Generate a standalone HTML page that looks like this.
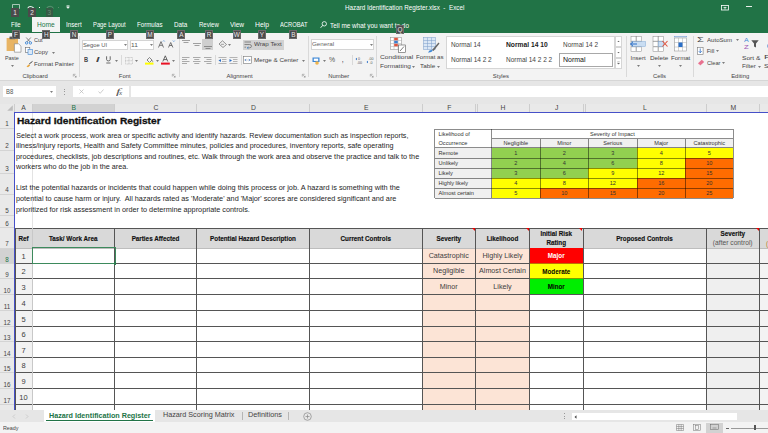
<!DOCTYPE html>
<html><head><meta charset="utf-8">
<style>
*{margin:0;padding:0;box-sizing:border-box}
html,body{width:768px;height:433px;overflow:hidden;background:#fff;font-family:"Liberation Sans",sans-serif;position:relative}
.a{position:absolute;white-space:nowrap}
svg.a{overflow:visible}
</style></head><body>
<div class="a" style="left:0px;top:0px;width:768px;height:32.5px;background:#217346;"></div>
<div class="a" style="left:0px;top:32.5px;width:768px;height:47.5px;background:#f3f3f3;"></div>
<div class="a" style="left:0px;top:80px;width:768px;height:23.5px;background:#e6e6e6;"></div>
<div class="a" style="left:0px;top:80px;width:768px;height:0.7px;background:#d6d6d6;"></div>
<div class="a" style="left:0px;top:103.5px;width:768px;height:8.5px;background:#e9e9e9;"></div>
<div class="a" style="left:0px;top:112px;width:14px;height:298px;background:#e9e9e9;"></div>
<div class="a" style="left:345.00px;top:3.72px;font-size:6.3px;line-height:7.56px;color:#fff;">Hazard Identification Register.xlsx&nbsp; -&nbsp; Excel</div>
<svg class="a" style="left:11.5px;top:3.8px;" width="8" height="5" viewBox="0 0 8 5"><path d="M0.5 4.8V0.5H7.5V4.8" fill="none" stroke="#e0ebe4" stroke-width="0.7"/></svg>
<svg class="a" style="left:27px;top:5px;" width="8" height="4" viewBox="0 0 8 4"><path d="M0.8 3.2C1.8 1 4.5 1 6.8 3.2" fill="none" stroke="#f0f0f0" stroke-width="1.1"/></svg>
<div class="a" style="left:38.8px;top:6.8px;width:1.6px;height:1px;background:#fff;"></div>
<svg class="a" style="left:45.5px;top:5px;" width="8" height="4" viewBox="0 0 8 4"><path d="M0.5 3.5C2.5 0.5 6 0.5 7.5 3.5" fill="none" stroke="#5a8f6f" stroke-width="1.1"/></svg>
<div class="a" style="left:57.8px;top:6.8px;width:1.4px;height:1px;background:#5a8f6f;"></div>
<svg class="a" style="left:65.5px;top:5px;" width="4" height="4" viewBox="0 0 4 4"><path d="M0.5 0.6H3.5M0.6 1.8L2 3.4L3.4 1.8Z" fill="#fff" stroke="#fff" stroke-width="0.6"/></svg>
<div class="a" style="left:11.25px;top:8.1px;width:7.75px;height:8.799999999999999px;background:#4b4a4b;border:0.5px solid #4b4a4b"></div>
<div class="a" style="left:13.35px;top:8.66px;font-size:6.4px;line-height:7.68px;color:#e8e8e8;">1</div>
<div class="a" style="left:28.3px;top:8.1px;width:7.699999999999999px;height:8.799999999999999px;background:#4b4a4b;border:0.5px solid #4b4a4b"></div>
<div class="a" style="left:30.37px;top:8.66px;font-size:6.4px;line-height:7.68px;color:#e8e8e8;">2</div>
<div class="a" style="left:45.8px;top:8.1px;width:7.200000000000003px;height:8.799999999999999px;background:#365a45;border:0.5px solid #365a45"></div>
<div class="a" style="left:47.62px;top:8.66px;font-size:6.4px;line-height:7.68px;color:#6d8f7a;">3</div>
<svg class="a" style="left:721px;top:4.5px;" width="8" height="5.5" viewBox="0 0 8 5.5"><rect x="0.5" y="0.5" width="7" height="4.5" fill="none" stroke="#fff" stroke-width="0.8"/><path d="M2.5 2.5H5.5M4 1.8V4.5" stroke="#fff" stroke-width="0.7"/></svg>
<div class="a" style="left:746px;top:6px;width:6px;height:0.8px;background:#e8efe9;"></div>
<div class="a" style="left:32.3px;top:16.7px;width:27.7px;height:15.8px;background:#f3f3f3;"></div>
<div class="a" style="left:10.60px;top:21.22px;font-size:6.3px;line-height:7.56px;color:#fff;transform:scaleX(0.9555);transform-origin:0 50%;">File</div>
<div class="a" style="left:37.00px;top:21.22px;font-size:6.3px;line-height:7.56px;color:#217346;transform:scaleX(1.0532);transform-origin:0 50%;">Home</div>
<div class="a" style="left:65.60px;top:21.22px;font-size:6.3px;line-height:7.56px;color:#fff;transform:scaleX(0.9933);transform-origin:0 50%;">Insert</div>
<div class="a" style="left:92.70px;top:21.22px;font-size:6.3px;line-height:7.56px;color:#fff;transform:scaleX(0.9243);transform-origin:0 50%;">Page Layout</div>
<div class="a" style="left:137.40px;top:21.22px;font-size:6.3px;line-height:7.56px;color:#fff;transform:scaleX(0.9712);transform-origin:0 50%;">Formulas</div>
<div class="a" style="left:174.30px;top:21.22px;font-size:6.3px;line-height:7.56px;color:#fff;transform:scaleX(1.0069);transform-origin:0 50%;">Data</div>
<div class="a" style="left:198.80px;top:21.22px;font-size:6.3px;line-height:7.56px;color:#fff;transform:scaleX(0.9585);transform-origin:0 50%;">Review</div>
<div class="a" style="left:230.20px;top:21.22px;font-size:6.3px;line-height:7.56px;color:#fff;transform:scaleX(1.0412);transform-origin:0 50%;">View</div>
<div class="a" style="left:255.00px;top:21.22px;font-size:6.3px;line-height:7.56px;color:#fff;transform:scaleX(1.0805);transform-origin:0 50%;">Help</div>
<div class="a" style="left:279.60px;top:21.22px;font-size:6.3px;line-height:7.56px;color:#fff;transform:scaleX(0.9204);transform-origin:0 50%;">ACROBAT</div>
<div class="a" style="left:330.00px;top:21.92px;font-size:6.3px;line-height:7.56px;color:#fff;transform:scaleX(1.0162);transform-origin:0 50%;">Tell me what you want to do</div>
<svg class="a" style="left:320px;top:20.5px;" width="7" height="8" viewBox="0 0 7 8"><circle cx="4.3" cy="2.8" r="2.2" fill="none" stroke="#fff" stroke-width="0.8"/><path d="M2.8 4.3L0.6 6.8" stroke="#fff" stroke-width="0.9"/></svg>
<svg class="a" style="left:6px;top:36px;" width="16" height="17" viewBox="0 0 16 17"><rect x="0.6" y="2" width="11.4" height="13" fill="#e8b464"/><rect x="3.5" y="0.6" width="5.5" height="2.6" fill="#5a5a5a"/><path d="M8.4 7.8H12.6L15 10.2V16.2H8.4Z" fill="#fff" stroke="#7a7a7a" stroke-width="0.6"/></svg>
<div class="a" style="left:5.40px;top:54.60px;font-size:6px;line-height:7.20px;color:#444;transform:scaleX(0.8994);transform-origin:0 50%;">Paste</div>
<svg class="a" style="left:11.1px;top:64.8px;" width="3" height="2" viewBox="0 0 3 2"><path d="M0 0.2H3L1.5 1.8Z" fill="#555"/></svg>
<svg class="a" style="left:24.5px;top:36.5px;" width="7" height="7.5" viewBox="0 0 7 7.5"><path d="M1.2 0.5L5.2 5M5.8 0.5L1.8 5" stroke="#6a6a6a" stroke-width="0.8"/><circle cx="1.6" cy="5.9" r="1.2" fill="none" stroke="#3b86d6" stroke-width="0.9"/><circle cx="5.4" cy="5.9" r="1.2" fill="none" stroke="#3b86d6" stroke-width="0.9"/></svg>
<div class="a" style="left:34.00px;top:37.00px;font-size:6px;line-height:7.20px;color:#444;transform:scaleX(0.9211);transform-origin:0 50%;">Cut</div>
<svg class="a" style="left:24.5px;top:47.3px;" width="8" height="8" viewBox="0 0 8 8"><rect x="0.5" y="0.5" width="4.3" height="5" fill="#fff" stroke="#6a6a6a" stroke-width="0.6"/><rect x="3" y="2.5" width="4.5" height="5" fill="#dbe8f7" stroke="#3b86d6" stroke-width="0.6"/></svg>
<div class="a" style="left:34.00px;top:48.60px;font-size:6px;line-height:7.20px;color:#444;">Copy</div>
<svg class="a" style="left:52.3px;top:51.6px;" width="3" height="2" viewBox="0 0 3 2"><path d="M0 0.2H3L1.5 1.8Z" fill="#555"/></svg>
<svg class="a" style="left:25.5px;top:60.5px;" width="7" height="6.5" viewBox="0 0 7 6.5"><path d="M0.5 5.5L3 3.3L4.2 4.5L2 6.3Z" fill="#e8a53a"/><path d="M3.2 3L6.5 0.4" stroke="#444" stroke-width="1"/></svg>
<div class="a" style="left:34.00px;top:60.60px;font-size:6px;line-height:7.20px;color:#444;transform:scaleX(1.0055);transform-origin:0 50%;">Format Painter</div>
<div class="a" style="left:22.47px;top:72.66px;font-size:5.9px;line-height:7.08px;color:#444;">Clipboard</div>
<svg class="a" style="left:73.3px;top:74.3px;" width="3.5" height="3.5" viewBox="0 0 3.5 3.5"><path d="M0.3 0.3H2.5M0.3 0.3V2.5M1.2 1.2L3.2 3.2M3.2 1.8V3.2H1.8" fill="none" stroke="#777" stroke-width="0.5"/></svg>
<div class="a" style="left:79.2px;top:35.5px;width:0.6px;height:41.5px;background:#d9d9d9;"></div>
<div class="a" style="left:81.8px;top:39.8px;width:46.3px;height:10.1px;background:#fff;border:0.5px solid #d4d4d4"></div>
<div class="a" style="left:82.90px;top:41.08px;font-size:6.2px;line-height:7.44px;color:#555;transform:scaleX(0.9361);transform-origin:0 50%;">Segoe UI</div>
<svg class="a" style="left:123.8px;top:44px;" width="3" height="2" viewBox="0 0 3 2"><path d="M0 0.2H3L1.5 1.8Z" fill="#555"/></svg>
<div class="a" style="left:129.9px;top:39.8px;width:23.9px;height:10.1px;background:#fff;border:0.5px solid #d4d4d4"></div>
<div class="a" style="left:131.20px;top:41.08px;font-size:6.2px;line-height:7.44px;color:#555;transform:scaleX(1.0565);transform-origin:0 50%;">11</div>
<svg class="a" style="left:149.5px;top:44px;" width="3" height="2" viewBox="0 0 3 2"><path d="M0 0.2H3L1.5 1.8Z" fill="#555"/></svg>
<svg class="a" style="left:157.5px;top:39.5px;" width="7" height="8" viewBox="0 0 7 8"><path d="M0.5 7.5L3 1.6L5.5 7.5M1.5 5.3H4.5" fill="none" stroke="#555" stroke-width="0.8"/><path d="M4.8 1.6L5.8 0.5L6.8 1.6" fill="none" stroke="#3b86d6" stroke-width="0.6"/></svg>
<svg class="a" style="left:168.3px;top:39.5px;" width="7" height="8" viewBox="0 0 7 8"><path d="M0.5 7.5L2.7 2.5L4.9 7.5M1.4 5.5H4" fill="none" stroke="#555" stroke-width="0.8"/><path d="M4.8 0.5L5.8 1.6L6.8 0.5" fill="none" stroke="#3b86d6" stroke-width="0.6"/></svg>
<div class="a" style="left:84.10px;top:56.30px;font-size:6.5px;line-height:7.80px;color:#444;font-weight:bold;transform:scaleX(0.8734);transform-origin:0 50%;">B</div>
<div class="a" style="left:95.60px;top:56.30px;font-size:6.5px;line-height:7.80px;color:#444;font-weight:bold;transform:scaleX(1.8827);transform-origin:0 50%;font-style:italic;">I</div>
<svg class="a" style="left:105.6px;top:56px;" width="5" height="7.5" viewBox="0 0 5 7.5"><path d="M0.6 0.3V3.6C0.6 5.4 4.2 5.4 4.2 3.6V0.3M0.3 7H4.5" fill="none" stroke="#444" stroke-width="0.8"/></svg>
<svg class="a" style="left:115.1px;top:59.5px;" width="3" height="2" viewBox="0 0 3 2"><path d="M0 0.2H3L1.5 1.8Z" fill="#555"/></svg>
<div class="a" style="left:121px;top:55px;width:0.6px;height:10px;background:#d9d9d9;"></div>
<svg class="a" style="left:124.5px;top:56.5px;" width="8" height="7.5" viewBox="0 0 8 7.5"><rect x="0.5" y="0.5" width="7" height="6.5" fill="none" stroke="#aaa" stroke-width="0.6" stroke-dasharray="0.8 0.6"/><path d="M4 0.5V7M0.5 3.75H7.5" stroke="#aaa" stroke-width="0.6" stroke-dasharray="0.8 0.6"/></svg>
<svg class="a" style="left:135.0px;top:59.5px;" width="3" height="2" viewBox="0 0 3 2"><path d="M0 0.2H3L1.5 1.8Z" fill="#555"/></svg>
<svg class="a" style="left:144.8px;top:54.5px;" width="9" height="10" viewBox="0 0 9 10"><path d="M2 5L4.5 2.5L7 5L4.5 7.5Z" fill="none" stroke="#555" stroke-width="0.7"/><path d="M7 5.2Q8.2 6.5 7.5 7.2" fill="none" stroke="#555" stroke-width="0.6"/><rect x="0" y="7.6" width="8.5" height="2" fill="#ffff00"/></svg>
<svg class="a" style="left:155.5px;top:59.5px;" width="3" height="2" viewBox="0 0 3 2"><path d="M0 0.2H3L1.5 1.8Z" fill="#555"/></svg>
<svg class="a" style="left:161.2px;top:54.5px;" width="9" height="10" viewBox="0 0 9 10"><path d="M1.8 6.5L4.3 0.8L6.8 6.5M2.7 4.6H5.9" fill="none" stroke="#444" stroke-width="0.8"/><rect x="0" y="7.6" width="8.8" height="2" fill="#e81123"/></svg>
<svg class="a" style="left:172.0px;top:59.5px;" width="3" height="2" viewBox="0 0 3 2"><path d="M0 0.2H3L1.5 1.8Z" fill="#555"/></svg>
<div class="a" style="left:118.80px;top:72.66px;font-size:5.9px;line-height:7.08px;color:#444;">Font</div>
<svg class="a" style="left:172px;top:74.3px;" width="3.5" height="3.5" viewBox="0 0 3.5 3.5"><path d="M0.3 0.3H2.5M0.3 0.3V2.5M1.2 1.2L3.2 3.2M3.2 1.8V3.2H1.8" fill="none" stroke="#777" stroke-width="0.5"/></svg>
<div class="a" style="left:178.5px;top:35.5px;width:0.6px;height:41.5px;background:#d9d9d9;"></div>
<div class="a" style="left:202.2px;top:39px;width:10.6px;height:11.1px;background:#cfcfcf;"></div>
<svg class="a" style="left:182px;top:40px;" width="8" height="9" viewBox="0 0 8 9"><path d="M0 0.5H8M1.5 2.5H6.5" stroke="#8a8a8a" stroke-width="0.8"/></svg>
<svg class="a" style="left:192.8px;top:40px;" width="8" height="9" viewBox="0 0 8 9"><path d="M0 3.5H8M1.5 5.5H6.5" stroke="#8a8a8a" stroke-width="0.8"/></svg>
<svg class="a" style="left:203.8px;top:40px;" width="8" height="10" viewBox="0 0 8 10"><path d="M0 6.5H8M1.5 8.5H6.5" stroke="#7a7a7a" stroke-width="0.8"/></svg>
<svg class="a" style="left:217.5px;top:40px;" width="9.5" height="8" viewBox="0 0 9.5 8"><path d="M1 4L4.5 0.8L8.5 4.5L5 7.5Z" fill="none" stroke="#666" stroke-width="0.7"/><path d="M3 4.3H6" stroke="#666" stroke-width="0.6"/></svg>
<svg class="a" style="left:227.6px;top:43.8px;" width="3" height="2" viewBox="0 0 3 2"><path d="M0 0.2H3L1.5 1.8Z" fill="#555"/></svg>
<div class="a" style="left:242.9px;top:39.5px;width:41.5px;height:10.6px;background:#d2d2d2;"></div>
<svg class="a" style="left:244px;top:40.5px;" width="8" height="8.5" viewBox="0 0 8 8.5"><path d="M0.5 1H7M0.5 3.5H5.5Q7.5 3.5 7.5 5.2Q7.5 6.8 5.5 6.8H3.5M0.5 6.2H2" fill="none" stroke="#666" stroke-width="0.7"/><path d="M4.5 5.8L3 6.8L4.5 7.8" fill="none" stroke="#3b86d6" stroke-width="0.7"/></svg>
<div class="a" style="left:253.90px;top:41.20px;font-size:6px;line-height:7.20px;color:#444;transform:scaleX(1.0377);transform-origin:0 50%;">Wrap Text</div>
<svg class="a" style="left:182px;top:57px;" width="8" height="8" viewBox="0 0 8 8"><path d="M0 0.5H7.5M0 2.5H5M0 4.5H7.5M0 6.5H5" stroke="#8a8a8a" stroke-width="0.7"/></svg>
<svg class="a" style="left:192.8px;top:57px;" width="8" height="8" viewBox="0 0 8 8"><path d="M0 0.5H7.5M1.25 2.5H6.25M0 4.5H7.5M1.25 6.5H6.25" stroke="#8a8a8a" stroke-width="0.7"/></svg>
<svg class="a" style="left:204px;top:57px;" width="8" height="8" viewBox="0 0 8 8"><path d="M0 0.5H7.5M2.5 2.5H7.5M0 4.5H7.5M2.5 6.5H7.5" stroke="#8a8a8a" stroke-width="0.7"/></svg>
<div class="a" style="left:215px;top:55px;width:0.6px;height:10px;background:#d9d9d9;"></div>
<svg class="a" style="left:218px;top:56.5px;" width="9" height="8" viewBox="0 0 9 8"><path d="M0.5 0.5H8.5M4 2.5H8.5M4 4.5H8.5M0.5 6.5H8.5" stroke="#8a8a8a" stroke-width="0.6"/><path d="M3 2L0.5 3.5L3 5Z" fill="#2b6fc7"/></svg>
<svg class="a" style="left:229px;top:56.5px;" width="9" height="8" viewBox="0 0 9 8"><path d="M0.5 0.5H8.5M4 2.5H8.5M4 4.5H8.5M0.5 6.5H8.5" stroke="#8a8a8a" stroke-width="0.6"/><path d="M0.5 2L3 3.5L0.5 5Z" fill="#2b6fc7"/></svg>
<div class="a" style="left:240.6px;top:55px;width:0.6px;height:10px;background:#d9d9d9;"></div>
<svg class="a" style="left:243.2px;top:56.3px;" width="9" height="8" viewBox="0 0 9 8"><rect x="0.5" y="0.5" width="8" height="7" fill="#fff" stroke="#777" stroke-width="0.6"/><path d="M0.5 4H8.5" stroke="#999" stroke-width="0.5"/><path d="M2 4L3.2 3M2 4L3.2 5M7 4L5.8 3M7 4L5.8 5" stroke="#2b6fc7" stroke-width="0.6" fill="none"/></svg>
<div class="a" style="left:253.90px;top:56.70px;font-size:6px;line-height:7.20px;color:#444;transform:scaleX(1.0460);transform-origin:0 50%;">Merge &amp; Center</div>
<svg class="a" style="left:301.6px;top:59.6px;" width="3" height="2" viewBox="0 0 3 2"><path d="M0 0.2H3L1.5 1.8Z" fill="#555"/></svg>
<div class="a" style="left:226.48px;top:72.66px;font-size:5.9px;line-height:7.08px;color:#444;">Alignment</div>
<svg class="a" style="left:302px;top:74.3px;" width="3.5" height="3.5" viewBox="0 0 3.5 3.5"><path d="M0.3 0.3H2.5M0.3 0.3V2.5M1.2 1.2L3.2 3.2M3.2 1.8V3.2H1.8" fill="none" stroke="#777" stroke-width="0.5"/></svg>
<div class="a" style="left:308.3px;top:35.5px;width:0.6px;height:41.5px;background:#d9d9d9;"></div>
<div class="a" style="left:310.7px;top:38.8px;width:63.6px;height:11.1px;background:#fff;border:0.5px solid #d4d4d4"></div>
<div class="a" style="left:311.80px;top:40.90px;font-size:6px;line-height:7.20px;color:#666;transform:scaleX(1.0400);transform-origin:0 50%;">General</div>
<svg class="a" style="left:370.0px;top:43.8px;" width="3" height="2" viewBox="0 0 3 2"><path d="M0 0.2H3L1.5 1.8Z" fill="#555"/></svg>
<svg class="a" style="left:311.5px;top:56.5px;" width="9.5" height="8" viewBox="0 0 9.5 8"><rect x="0.5" y="0.5" width="7" height="4.5" fill="#3b86d6"/><rect x="1.8" y="1.6" width="4.4" height="2.3" fill="#fff"/><circle cx="5" cy="6" r="1.8" fill="#f0b44c"/></svg>
<svg class="a" style="left:322.5px;top:59.5px;" width="3" height="2" viewBox="0 0 3 2"><path d="M0 0.2H3L1.5 1.8Z" fill="#555"/></svg>
<div class="a" style="left:329.30px;top:56.30px;font-size:6.5px;line-height:7.80px;color:#555;transform:scaleX(1.0555);transform-origin:0 50%;">%</div>
<div class="a" style="left:342.30px;top:56.00px;font-size:7px;line-height:8.40px;color:#555;font-weight:bold;transform:scaleX(0.7199);transform-origin:0 50%;">,</div>
<div class="a" style="left:351.5px;top:55px;width:0.6px;height:10px;background:#d9d9d9;"></div>
<svg class="a" style="left:355px;top:56px;" width="8" height="8" viewBox="0 0 8 8"><path d="M0.5 3L2 1.8V4.2Z" fill="#2b6fc7"/><text x="3" y="3.5" font-size="3.6" fill="#555" font-family="Liberation Sans">0</text><text x="2" y="7.5" font-size="3.6" fill="#555" font-family="Liberation Sans">.00</text></svg>
<svg class="a" style="left:365.5px;top:56px;" width="8" height="8" viewBox="0 0 8 8"><text x="2.5" y="3.5" font-size="3.6" fill="#555" font-family="Liberation Sans">.00</text><path d="M0.5 6L2 4.8V7.2Z" fill="#2b6fc7"/><text x="3.5" y="7.5" font-size="3.6" fill="#555" font-family="Liberation Sans">.0</text></svg>
<div class="a" style="left:328.21px;top:72.66px;font-size:5.9px;line-height:7.08px;color:#444;">Number</div>
<svg class="a" style="left:370.2px;top:74.3px;" width="3.5" height="3.5" viewBox="0 0 3.5 3.5"><path d="M0.3 0.3H2.5M0.3 0.3V2.5M1.2 1.2L3.2 3.2M3.2 1.8V3.2H1.8" fill="none" stroke="#777" stroke-width="0.5"/></svg>
<div class="a" style="left:376.2px;top:35.5px;width:0.6px;height:41.5px;background:#d9d9d9;"></div>
<svg class="a" style="left:390px;top:36.5px;" width="16" height="16" viewBox="0 0 16 16"><rect x="0.5" y="0.5" width="11" height="12" fill="#fff" stroke="#888" stroke-width="0.5"/><path d="M0.5 3.5H11.5M0.5 6.5H11.5M0.5 9.5H11.5M4 0.5V12.5M8 0.5V12.5" stroke="#aaa" stroke-width="0.5"/><rect x="4.2" y="0.8" width="3.6" height="2.5" fill="#e0533d"/><rect x="4.2" y="3.8" width="3.6" height="2.5" fill="#3b7fd0"/><rect x="4.2" y="6.8" width="3.6" height="2.5" fill="#e0533d"/><rect x="8.5" y="8" width="7" height="7.5" fill="#fff" stroke="#555" stroke-width="0.6"/><path d="M10 14L14 9.5" stroke="#444" stroke-width="0.7"/></svg>
<div class="a" style="left:380.00px;top:54.10px;font-size:6px;line-height:7.20px;color:#444;transform:scaleX(1.1092);transform-origin:0 50%;">Conditional</div>
<div class="a" style="left:379.70px;top:62.60px;font-size:6px;line-height:7.20px;color:#444;transform:scaleX(1.0741);transform-origin:0 50%;">Formatting</div>
<svg class="a" style="left:411.8px;top:65.5px;" width="3" height="2" viewBox="0 0 3 2"><path d="M0 0.2H3L1.5 1.8Z" fill="#555"/></svg>
<svg class="a" style="left:422.5px;top:36.5px;" width="17" height="16" viewBox="0 0 17 16"><rect x="0.5" y="0.5" width="12" height="12" fill="#dbe7f5" stroke="#7a9cc8" stroke-width="0.5"/><path d="M0.5 3.5H12.5M0.5 6.5H12.5M0.5 9.5H12.5M4.5 0.5V12.5M8.5 0.5V12.5" stroke="#7a9cc8" stroke-width="0.5"/><path d="M9 13L15.5 5.5L16.5 6.5L10.5 14Z" fill="#666"/><path d="M5 15.5Q7 12 10 13.5Q8 16 5 15.5Z" fill="#3b86d6"/></svg>
<div class="a" style="left:416.20px;top:54.10px;font-size:6px;line-height:7.20px;color:#444;transform:scaleX(1.0183);transform-origin:0 50%;">Format as</div>
<div class="a" style="left:420.30px;top:62.60px;font-size:6px;line-height:7.20px;color:#444;transform:scaleX(1.0597);transform-origin:0 50%;">Table</div>
<svg class="a" style="left:437.0px;top:65.5px;" width="3" height="2" viewBox="0 0 3 2"><path d="M0 0.2H3L1.5 1.8Z" fill="#555"/></svg>
<div class="a" style="left:446.2px;top:35.5px;width:168.8px;height:33px;background:#fff;border:0.6px solid #d6d6d6"></div>
<div class="a" style="left:615px;top:35.5px;width:7px;height:11px;background:#fff;border:0.6px solid #d6d6d6"></div>
<div class="a" style="left:615px;top:46.5px;width:7px;height:11px;background:#fff;border:0.6px solid #d6d6d6"></div>
<div class="a" style="left:615px;top:57.5px;width:7px;height:11px;background:#fff;border:0.6px solid #d6d6d6"></div>
<svg class="a" style="left:617px;top:39.5px;" width="3" height="3" viewBox="0 0 3 3"><path d="M0.3 2H2.7L1.5 0.8Z" fill="#666"/></svg>
<svg class="a" style="left:617px;top:50.5px;" width="3" height="3" viewBox="0 0 3 3"><path d="M0.3 1H2.7L1.5 2.2Z" fill="#666"/></svg>
<svg class="a" style="left:617px;top:61px;" width="3" height="4" viewBox="0 0 3 4"><path d="M0.3 0.5H2.7M0.3 2H2.7L1.5 3.2Z" fill="#666" stroke="#666" stroke-width="0.3"/></svg>
<div class="a" style="left:450.50px;top:40.97px;font-size:6.3px;line-height:7.56px;color:#444;transform:scaleX(1.0151);transform-origin:0 50%;">Normal 14</div>
<div class="a" style="left:506.25px;top:40.97px;font-size:6.3px;line-height:7.56px;color:#222;font-weight:bold;transform:scaleX(1.0645);transform-origin:0 50%;">Normal 14 10</div>
<div class="a" style="left:562.50px;top:40.97px;font-size:6.3px;line-height:7.56px;color:#444;transform:scaleX(1.0200);transform-origin:0 50%;">Normal 14 2</div>
<div class="a" style="left:450.50px;top:55.97px;font-size:6.3px;line-height:7.56px;color:#444;transform:scaleX(1.0298);transform-origin:0 50%;">Normal 14 2 2</div>
<div class="a" style="left:506.25px;top:55.97px;font-size:6.3px;line-height:7.56px;color:#444;transform:scaleX(1.0318);transform-origin:0 50%;">Normal 14 2 2 2</div>
<div class="a" style="left:558.75px;top:52.5px;width:54.25px;height:14.25px;background:#fff;border:1.1px solid #a8a8a8"></div>
<div class="a" style="left:562.50px;top:55.70px;font-size:6.5px;line-height:7.80px;color:#111;transform:scaleX(1.0741);transform-origin:0 50%;">Normal</div>
<div class="a" style="left:492.87px;top:72.66px;font-size:5.9px;line-height:7.08px;color:#444;">Styles</div>
<div class="a" style="left:626.3px;top:35.5px;width:0.6px;height:41.5px;background:#d9d9d9;"></div>
<svg class="a" style="left:629.6px;top:36px;" width="16" height="16" viewBox="0 0 16 16"><g fill="#fff" stroke="#8a8a8a" stroke-width="0.5"><rect x="1" y="0.5" width="5" height="4.6"/><rect x="1" y="5.7" width="5" height="4.6"/><rect x="1" y="10.9" width="5" height="4.6"/><rect x="6.5" y="0.5" width="5" height="4.6"/><rect x="6.5" y="5.7" width="5" height="4.6"/><rect x="6.5" y="10.9" width="5" height="4.6"/></g><rect x="2" y="5.7" width="13.5" height="4.6" fill="#c9ddf2" stroke="#7fa7d6" stroke-width="0.5"/><path d="M0.5 8H7M0.5 8L3 5.8M0.5 8L3 10.2" stroke="#2b6fc7" stroke-width="1" fill="none"/></svg>
<div class="a" style="left:630.60px;top:55.00px;font-size:6px;line-height:7.20px;color:#444;">Insert</div>
<svg class="a" style="left:636.8px;top:65.2px;" width="3" height="2" viewBox="0 0 3 2"><path d="M0 0.2H3L1.5 1.8Z" fill="#555"/></svg>
<svg class="a" style="left:651.8px;top:36px;" width="16" height="16" viewBox="0 0 16 16"><g fill="#fff" stroke="#8a8a8a" stroke-width="0.5"><rect x="1" y="0.5" width="5" height="4.6"/><rect x="1" y="5.7" width="5" height="4.6"/><rect x="1" y="10.9" width="5" height="4.6"/><rect x="6.5" y="0.5" width="5" height="4.6"/><rect x="6.5" y="5.7" width="5" height="4.6"/><rect x="6.5" y="10.9" width="5" height="4.6"/></g><rect x="6.5" y="5.7" width="5" height="4.6" fill="#c9ddf2" stroke="#7fa7d6" stroke-width="0.5"/><path d="M10.5 5L15.5 10.5M15.5 5L10.5 10.5" stroke="#e0533d" stroke-width="1.1"/></svg>
<div class="a" style="left:649.90px;top:55.00px;font-size:6px;line-height:7.20px;color:#444;transform:scaleX(1.0551);transform-origin:0 50%;">Delete</div>
<svg class="a" style="left:658.0px;top:65.2px;" width="3" height="2" viewBox="0 0 3 2"><path d="M0 0.2H3L1.5 1.8Z" fill="#555"/></svg>
<svg class="a" style="left:673px;top:36px;" width="15" height="16" viewBox="0 0 15 16"><rect x="1.5" y="2" width="12" height="13" fill="#fff" stroke="#8a8a8a" stroke-width="0.5"/><path d="M1.5 6.5H13.5M1.5 11H13.5M5.5 2V15M9.5 2V15" stroke="#aaa" stroke-width="0.5"/><rect x="5.5" y="6.5" width="4" height="4.5" fill="#2b6fc7"/><path d="M1.5 0.7H13.5M1.5 0.2V1.2M13.5 0.2V1.2" stroke="#2b6fc7" stroke-width="0.5"/></svg>
<div class="a" style="left:671.00px;top:55.00px;font-size:6px;line-height:7.20px;color:#444;transform:scaleX(1.0157);transform-origin:0 50%;">Format</div>
<svg class="a" style="left:679.2px;top:65.2px;" width="3" height="2" viewBox="0 0 3 2"><path d="M0 0.2H3L1.5 1.8Z" fill="#555"/></svg>
<div class="a" style="left:652.94px;top:72.66px;font-size:5.9px;line-height:7.08px;color:#444;">Cells</div>
<div class="a" style="left:693.2px;top:35.5px;width:0.6px;height:41.5px;background:#d9d9d9;"></div>
<div class="a" style="left:697.00px;top:35.40px;font-size:8px;line-height:9.60px;color:#444;transform:scaleX(1.3750);transform-origin:0 50%;">Σ</div>
<div class="a" style="left:706.70px;top:36.60px;font-size:6px;line-height:7.20px;color:#444;transform:scaleX(1.0170);transform-origin:0 50%;">AutoSum</div>
<svg class="a" style="left:735.6px;top:39.4px;" width="3" height="2" viewBox="0 0 3 2"><path d="M0 0.2H3L1.5 1.8Z" fill="#555"/></svg>
<svg class="a" style="left:697px;top:47.3px;" width="6.5" height="7.8" viewBox="0 0 6.5 7.8"><rect x="0.4" y="0.4" width="5.7" height="7" fill="#fff" stroke="#777" stroke-width="0.6"/><path d="M3.25 1.5V5.5M1.8 4.2L3.25 5.8L4.7 4.2" stroke="#2b6fc7" stroke-width="0.8" fill="none"/></svg>
<div class="a" style="left:706.70px;top:47.50px;font-size:6px;line-height:7.20px;color:#444;">Fill</div>
<svg class="a" style="left:715.8px;top:50.3px;" width="3" height="2" viewBox="0 0 3 2"><path d="M0 0.2H3L1.5 1.8Z" fill="#555"/></svg>
<svg class="a" style="left:697px;top:59px;" width="8" height="7" viewBox="0 0 8 7"><path d="M0.8 4.5L4.8 0.8L7.2 3L3.2 6.5Z" fill="#e8718f"/><path d="M0.8 4.5L3.2 6.5" stroke="#fff" stroke-width="0.5"/></svg>
<div class="a" style="left:706.70px;top:59.50px;font-size:6px;line-height:7.20px;color:#444;transform:scaleX(0.9416);transform-origin:0 50%;">Clear</div>
<svg class="a" style="left:722.2px;top:62.3px;" width="3" height="2" viewBox="0 0 3 2"><path d="M0 0.2H3L1.5 1.8Z" fill="#555"/></svg>
<div class="a" style="left:744.30px;top:36.70px;font-size:5.5px;line-height:6.60px;color:#3b86d6;transform:scaleX(1.2812);transform-origin:0 50%;">A</div>
<div class="a" style="left:744.30px;top:44.20px;font-size:5.5px;line-height:6.60px;color:#9b59b6;transform:scaleX(1.3990);transform-origin:0 50%;">Z</div>
<svg class="a" style="left:751px;top:39.6px;" width="8" height="8" viewBox="0 0 8 8"><path d="M0.3 0.3H7.7L5 3.5V7.5L3 6.5V3.5Z" fill="#555"/></svg>
<div class="a" style="left:742.30px;top:54.80px;font-size:6px;line-height:7.20px;color:#444;transform:scaleX(1.1036);transform-origin:0 50%;">Sort &amp;</div>
<div class="a" style="left:742.30px;top:62.60px;font-size:6px;line-height:7.20px;color:#444;transform:scaleX(1.0275);transform-origin:0 50%;">Filter</div>
<svg class="a" style="left:758.0px;top:65.5px;" width="3" height="2" viewBox="0 0 3 2"><path d="M0 0.2H3L1.5 1.8Z" fill="#555"/></svg>
<div class="a" style="left:763.50px;top:54.30px;font-size:6px;line-height:7.20px;color:#444;transform:scaleX(1.7006);transform-origin:0 50%;">Fi</div>
<div class="a" style="left:763.50px;top:62.60px;font-size:6px;line-height:7.20px;color:#444;transform:scaleX(1.1582);transform-origin:0 50%;">Se</div>
<svg class="a" style="left:766px;top:44px;" width="3" height="4" viewBox="0 0 3 4"><path d="M2 0.5V3.5" stroke="#2b6fc7" stroke-width="1"/></svg>
<div class="a" style="left:731.18px;top:72.66px;font-size:5.9px;line-height:7.08px;color:#444;">Editing</div>
<div class="a" style="left:12px;top:30.4px;width:8px;height:8.800000000000004px;background:#4b4a4b;border:0.5px solid #6a6a6a"></div>
<div class="a" style="left:14.05px;top:30.96px;font-size:6.4px;line-height:7.68px;color:#e8e8e8;">F</div>
<div class="a" style="left:42.2px;top:30.4px;width:8.0px;height:8.800000000000004px;background:#4b4a4b;border:0.5px solid #6a6a6a"></div>
<div class="a" style="left:43.89px;top:30.96px;font-size:6.4px;line-height:7.68px;color:#e8e8e8;">H</div>
<div class="a" style="left:70px;top:30.4px;width:8px;height:8.800000000000004px;background:#4b4a4b;border:0.5px solid #6a6a6a"></div>
<div class="a" style="left:71.69px;top:30.96px;font-size:6.4px;line-height:7.68px;color:#e8e8e8;">N</div>
<div class="a" style="left:105.8px;top:30.4px;width:8.0px;height:8.800000000000004px;background:#4b4a4b;border:0.5px solid #6a6a6a"></div>
<div class="a" style="left:107.67px;top:30.96px;font-size:6.4px;line-height:7.68px;color:#e8e8e8;">P</div>
<div class="a" style="left:146px;top:30.4px;width:8px;height:8.800000000000004px;background:#4b4a4b;border:0.5px solid #6a6a6a"></div>
<div class="a" style="left:147.33px;top:30.96px;font-size:6.4px;line-height:7.68px;color:#e8e8e8;">M</div>
<div class="a" style="left:177.4px;top:30.4px;width:8.0px;height:8.800000000000004px;background:#4b4a4b;border:0.5px solid #6a6a6a"></div>
<div class="a" style="left:179.27px;top:30.96px;font-size:6.4px;line-height:7.68px;color:#e8e8e8;">A</div>
<div class="a" style="left:205px;top:30.4px;width:8px;height:8.800000000000004px;background:#4b4a4b;border:0.5px solid #6a6a6a"></div>
<div class="a" style="left:206.69px;top:30.96px;font-size:6.4px;line-height:7.68px;color:#e8e8e8;">R</div>
<div class="a" style="left:232.7px;top:30.4px;width:8.0px;height:8.800000000000004px;background:#4b4a4b;border:0.5px solid #6a6a6a"></div>
<div class="a" style="left:233.68px;top:30.96px;font-size:6.4px;line-height:7.68px;color:#e8e8e8;">W</div>
<div class="a" style="left:258px;top:30.4px;width:8px;height:8.800000000000004px;background:#4b4a4b;border:0.5px solid #6a6a6a"></div>
<div class="a" style="left:259.87px;top:30.96px;font-size:6.4px;line-height:7.68px;color:#e8e8e8;">Y</div>
<div class="a" style="left:289.3px;top:30.4px;width:8.0px;height:8.800000000000004px;background:#4b4a4b;border:0.5px solid #6a6a6a"></div>
<div class="a" style="left:291.17px;top:30.96px;font-size:6.4px;line-height:7.68px;color:#e8e8e8;">B</div>
<div class="a" style="left:396.1px;top:25.4px;width:7.899999999999977px;height:8.800000000000004px;background:#4b4a4b;border:0.5px solid #6a6a6a"></div>
<div class="a" style="left:397.56px;top:25.96px;font-size:6.4px;line-height:7.68px;color:#e8e8e8;">Q</div>
<div class="a" style="left:2.7px;top:85.7px;width:52.9px;height:11.4px;background:#fff;"></div>
<div class="a" style="left:6.00px;top:87.52px;font-size:6.8px;line-height:8.16px;color:#555;transform:scaleX(0.8777);transform-origin:0 50%;">B8</div>
<svg class="a" style="left:49.5px;top:91px;" width="3" height="2" viewBox="0 0 3 2"><path d="M0 0.2H3L1.5 1.8Z" fill="#555"/></svg>
<div class="a" style="left:63.5px;top:88.5px;width:0.8px;height:0.8px;background:#999;"></div>
<div class="a" style="left:63.5px;top:91.2px;width:0.8px;height:0.8px;background:#999;"></div>
<div class="a" style="left:63.5px;top:93.9px;width:0.8px;height:0.8px;background:#999;"></div>
<div class="a" style="left:72.9px;top:85.7px;width:56.1px;height:11.4px;background:#fff;"></div>
<svg class="a" style="left:78.5px;top:89px;" width="5" height="5" viewBox="0 0 5 5"><path d="M0.5 0.5L4.5 4.5M4.5 0.5L0.5 4.5" stroke="#b8b8b8" stroke-width="0.7"/></svg>
<svg class="a" style="left:97.5px;top:89px;" width="6" height="5" viewBox="0 0 6 5"><path d="M0.5 2.5L2.2 4.3L5.5 0.5" fill="none" stroke="#b8b8b8" stroke-width="0.7"/></svg>
<div class="a" style="left:116.00px;top:86.20px;font-size:8.5px;line-height:10.20px;color:#555;transform:scaleX(1.9055);transform-origin:0 50%;font-style:italic;font-family:'Liberation Serif';">f</div>
<div class="a" style="left:119.30px;top:89.90px;font-size:5.5px;line-height:6.60px;color:#555;transform:scaleX(1.2727);transform-origin:0 50%;font-style:italic;font-family:'Liberation Serif';">x</div>
<div class="a" style="left:131.2px;top:85.7px;width:636.8px;height:11.4px;background:#fff;"></div>
<svg class="a" style="left:7px;top:105px;" width="6" height="6" viewBox="0 0 6 6"><path d="M5.8 0.2V5.8H0.2Z" fill="#bdbdbd"/></svg>
<div class="a" style="left:13.5px;top:104px;width:0.6px;height:8px;background:#cdcdcd;"></div>
<div class="a" style="left:31.9px;top:103.5px;width:82.9px;height:8.5px;background:#d2d2d2;"></div>
<div class="a" style="left:21.23px;top:103.52px;font-size:6.8px;line-height:8.16px;color:#444;">A</div>
<div class="a" style="left:31.5px;top:104px;width:0.6px;height:8px;background:#cdcdcd;"></div>
<div class="a" style="left:71.48px;top:103.52px;font-size:6.8px;line-height:8.16px;color:#217346;">B</div>
<div class="a" style="left:114.0px;top:104px;width:0.6px;height:8px;background:#cdcdcd;"></div>
<div class="a" style="left:153.54px;top:103.52px;font-size:6.8px;line-height:8.16px;color:#444;">C</div>
<div class="a" style="left:196.0px;top:104px;width:0.6px;height:8px;background:#cdcdcd;"></div>
<div class="a" style="left:251.04px;top:103.52px;font-size:6.8px;line-height:8.16px;color:#444;">D</div>
<div class="a" style="left:309.0px;top:104px;width:0.6px;height:8px;background:#cdcdcd;"></div>
<div class="a" style="left:363.98px;top:103.52px;font-size:6.8px;line-height:8.16px;color:#444;">E</div>
<div class="a" style="left:421.5px;top:104px;width:0.6px;height:8px;background:#cdcdcd;"></div>
<div class="a" style="left:447.17px;top:103.52px;font-size:6.8px;line-height:8.16px;color:#444;">F</div>
<div class="a" style="left:475.0px;top:104px;width:0.6px;height:8px;background:#cdcdcd;"></div>
<div class="a" style="left:500.54px;top:103.52px;font-size:6.8px;line-height:8.16px;color:#444;">H</div>
<div class="a" style="left:529.0px;top:104px;width:0.6px;height:8px;background:#cdcdcd;"></div>
<div class="a" style="left:555.05px;top:103.52px;font-size:6.8px;line-height:8.16px;color:#444;">J</div>
<div class="a" style="left:582.5px;top:104px;width:0.6px;height:8px;background:#cdcdcd;"></div>
<div class="a" style="left:643.11px;top:103.52px;font-size:6.8px;line-height:8.16px;color:#444;">L</div>
<div class="a" style="left:705.5px;top:104px;width:0.6px;height:8px;background:#cdcdcd;"></div>
<div class="a" style="left:730.42px;top:103.52px;font-size:6.8px;line-height:8.16px;color:#444;">M</div>
<div class="a" style="left:759.0px;top:104px;width:0.6px;height:8px;background:#cdcdcd;"></div>
<div class="a" style="left:767.5px;top:104px;width:0.6px;height:8px;background:#cdcdcd;"></div>
<div class="a" style="left:477.0px;top:104px;width:0.6px;height:8px;background:#cdcdcd;"></div>
<div class="a" style="left:585.0px;top:104px;width:0.6px;height:8px;background:#cdcdcd;"></div>
<div class="a" style="left:14px;top:111.8px;width:754px;height:1px;background:#4650c8;"></div>
<div class="a" style="left:0px;top:248px;width:14px;height:15.5px;background:#d2d2d2;"></div>
<div class="a" style="left:0px;top:127.5px;width:14px;height:0.7px;background:#d4d4d4;"></div>
<div class="a" style="left:5.25px;top:120.22px;font-size:6.3px;line-height:7.56px;color:#444;">1</div>
<div class="a" style="left:0px;top:149.5px;width:14px;height:0.7px;background:#d4d4d4;"></div>
<div class="a" style="left:5.25px;top:142.22px;font-size:6.3px;line-height:7.56px;color:#444;">2</div>
<div class="a" style="left:0px;top:172.5px;width:14px;height:0.7px;background:#d4d4d4;"></div>
<div class="a" style="left:5.25px;top:165.22px;font-size:6.3px;line-height:7.56px;color:#444;">3</div>
<div class="a" style="left:0px;top:193.5px;width:14px;height:0.7px;background:#d4d4d4;"></div>
<div class="a" style="left:5.25px;top:186.22px;font-size:6.3px;line-height:7.56px;color:#444;">4</div>
<div class="a" style="left:0px;top:214.5px;width:14px;height:0.7px;background:#d4d4d4;"></div>
<div class="a" style="left:5.25px;top:207.22px;font-size:6.3px;line-height:7.56px;color:#444;">5</div>
<div class="a" style="left:0px;top:227.2px;width:14px;height:0.7px;background:#d4d4d4;"></div>
<div class="a" style="left:5.25px;top:219.92px;font-size:6.3px;line-height:7.56px;color:#444;">6</div>
<div class="a" style="left:0px;top:247.5px;width:14px;height:0.7px;background:#d4d4d4;"></div>
<div class="a" style="left:5.25px;top:240.22px;font-size:6.3px;line-height:7.56px;color:#444;">7</div>
<div class="a" style="left:0px;top:263.0px;width:14px;height:0.7px;background:#d4d4d4;"></div>
<div class="a" style="left:5.25px;top:255.72px;font-size:6.3px;line-height:7.56px;color:#217346;">8</div>
<div class="a" style="left:0px;top:278.0px;width:14px;height:0.7px;background:#d4d4d4;"></div>
<div class="a" style="left:5.25px;top:270.72px;font-size:6.3px;line-height:7.56px;color:#444;">9</div>
<div class="a" style="left:0px;top:294.0px;width:14px;height:0.7px;background:#d4d4d4;"></div>
<div class="a" style="left:3.50px;top:286.72px;font-size:6.3px;line-height:7.56px;color:#444;">10</div>
<div class="a" style="left:0px;top:310.0px;width:14px;height:0.7px;background:#d4d4d4;"></div>
<div class="a" style="left:3.73px;top:302.72px;font-size:6.3px;line-height:7.56px;color:#444;">11</div>
<div class="a" style="left:0px;top:326.0px;width:14px;height:0.7px;background:#d4d4d4;"></div>
<div class="a" style="left:3.50px;top:318.72px;font-size:6.3px;line-height:7.56px;color:#444;">12</div>
<div class="a" style="left:0px;top:341.0px;width:14px;height:0.7px;background:#d4d4d4;"></div>
<div class="a" style="left:3.50px;top:333.72px;font-size:6.3px;line-height:7.56px;color:#444;">13</div>
<div class="a" style="left:0px;top:357.0px;width:14px;height:0.7px;background:#d4d4d4;"></div>
<div class="a" style="left:3.50px;top:349.72px;font-size:6.3px;line-height:7.56px;color:#444;">14</div>
<div class="a" style="left:0px;top:372.0px;width:14px;height:0.7px;background:#d4d4d4;"></div>
<div class="a" style="left:3.50px;top:364.72px;font-size:6.3px;line-height:7.56px;color:#444;">15</div>
<div class="a" style="left:0px;top:388.0px;width:14px;height:0.7px;background:#d4d4d4;"></div>
<div class="a" style="left:3.50px;top:380.72px;font-size:6.3px;line-height:7.56px;color:#444;">16</div>
<div class="a" style="left:0px;top:404.0px;width:14px;height:0.7px;background:#d4d4d4;"></div>
<div class="a" style="left:3.50px;top:396.72px;font-size:6.3px;line-height:7.56px;color:#444;">17</div>
<div class="a" style="left:0px;top:419.5px;width:14px;height:0.7px;background:#d4d4d4;"></div>
<div class="a" style="left:31.7px;top:112.5px;width:0.6px;height:115px;background:#e3e3e3;"></div>
<div class="a" style="left:16.70px;top:115.00px;font-size:9.6px;line-height:11.52px;color:#111;font-weight:bold;transform:scaleX(1.0606);transform-origin:0 50%;-webkit-text-stroke:0.3px #111;">Hazard Identification Register</div>
<div class="a" style="left:16.30px;top:131.85px;font-size:7.15px;line-height:8.58px;color:#1e1e1e;">Select a work process, work area or specific activity and identify hazards. Review documentation such as inspection reports,</div>
<div class="a" style="left:16.30px;top:142.45px;font-size:7.15px;line-height:8.58px;color:#1e1e1e;transform:scaleX(1.0116);transform-origin:0 50%;">illness/injury reports, Health and Safety Committee minutes, policies and procedures, inventory reports, safe operating</div>
<div class="a" style="left:16.30px;top:152.75px;font-size:7.15px;line-height:8.58px;color:#1e1e1e;transform:scaleX(1.0154);transform-origin:0 50%;">procedures, checklists, job descriptions and routines, etc. Walk through the work area and observe the practice and talk to the</div>
<div class="a" style="left:16.30px;top:163.35px;font-size:7.15px;line-height:8.58px;color:#1e1e1e;transform:scaleX(1.0100);transform-origin:0 50%;">workers who do the job in the area.</div>
<div class="a" style="left:16.30px;top:183.85px;font-size:7.15px;line-height:8.58px;color:#1e1e1e;transform:scaleX(1.0245);transform-origin:0 50%;">List the potential hazards or incidents that could happen while doing this process or job. A hazard is something with the</div>
<div class="a" style="left:16.30px;top:195.05px;font-size:7.15px;line-height:8.58px;color:#1e1e1e;transform:scaleX(1.0191);transform-origin:0 50%;">potential to cause harm or injury.&nbsp; All hazards rated as 'Moderate' and 'Major' scores are considered significant and are</div>
<div class="a" style="left:16.30px;top:205.65px;font-size:7.15px;line-height:8.58px;color:#1e1e1e;transform:scaleX(1.0196);transform-origin:0 50%;">prioritized for risk assessment in order to determine appropriate controls.</div>
<div class="a" style="left:434.5px;top:147.8px;width:57.0px;height:50.19999999999999px;background:#f0f0f0;"></div>
<div class="a" style="left:491.5px;top:138.7px;width:241.70000000000005px;height:9.100000000000023px;background:#f0f0f0;"></div>
<div class="a" style="left:491.5px;top:147.8px;width:48.700000000000045px;height:10.399999999999977px;background:#92d050;"></div>
<div class="a" style="left:514.29px;top:149.64px;font-size:5.6px;line-height:6.72px;color:#333;">1</div>
<div class="a" style="left:540.2px;top:147.8px;width:48.19999999999993px;height:10.399999999999977px;background:#92d050;"></div>
<div class="a" style="left:562.74px;top:149.64px;font-size:5.6px;line-height:6.72px;color:#333;">2</div>
<div class="a" style="left:588.4px;top:147.8px;width:48.700000000000045px;height:10.399999999999977px;background:#92d050;"></div>
<div class="a" style="left:611.19px;top:149.64px;font-size:5.6px;line-height:6.72px;color:#333;">3</div>
<div class="a" style="left:637.1px;top:147.8px;width:48.299999999999955px;height:10.399999999999977px;background:#ffff00;"></div>
<div class="a" style="left:659.69px;top:149.64px;font-size:5.6px;line-height:6.72px;color:#333;">4</div>
<div class="a" style="left:685.4px;top:147.8px;width:47.80000000000007px;height:10.399999999999977px;background:#ffff00;"></div>
<div class="a" style="left:707.74px;top:149.64px;font-size:5.6px;line-height:6.72px;color:#333;">5</div>
<div class="a" style="left:438.50px;top:149.64px;font-size:5.6px;line-height:6.72px;color:#333;">Remote</div>
<div class="a" style="left:491.5px;top:158.2px;width:48.700000000000045px;height:10.0px;background:#92d050;"></div>
<div class="a" style="left:514.29px;top:159.84px;font-size:5.6px;line-height:6.72px;color:#333;">2</div>
<div class="a" style="left:540.2px;top:158.2px;width:48.19999999999993px;height:10.0px;background:#92d050;"></div>
<div class="a" style="left:562.74px;top:159.84px;font-size:5.6px;line-height:6.72px;color:#333;">4</div>
<div class="a" style="left:588.4px;top:158.2px;width:48.700000000000045px;height:10.0px;background:#92d050;"></div>
<div class="a" style="left:611.19px;top:159.84px;font-size:5.6px;line-height:6.72px;color:#333;">6</div>
<div class="a" style="left:637.1px;top:158.2px;width:48.299999999999955px;height:10.0px;background:#ffff00;"></div>
<div class="a" style="left:659.69px;top:159.84px;font-size:5.6px;line-height:6.72px;color:#333;">8</div>
<div class="a" style="left:685.4px;top:158.2px;width:47.80000000000007px;height:10.0px;background:#ff6c00;"></div>
<div class="a" style="left:706.19px;top:159.84px;font-size:5.6px;line-height:6.72px;color:#333;">10</div>
<div class="a" style="left:438.50px;top:159.84px;font-size:5.6px;line-height:6.72px;color:#333;">Unlikely</div>
<div class="a" style="left:491.5px;top:168.2px;width:48.700000000000045px;height:9.900000000000006px;background:#92d050;"></div>
<div class="a" style="left:514.29px;top:169.79px;font-size:5.6px;line-height:6.72px;color:#333;">3</div>
<div class="a" style="left:540.2px;top:168.2px;width:48.19999999999993px;height:9.900000000000006px;background:#92d050;"></div>
<div class="a" style="left:562.74px;top:169.79px;font-size:5.6px;line-height:6.72px;color:#333;">6</div>
<div class="a" style="left:588.4px;top:168.2px;width:48.700000000000045px;height:9.900000000000006px;background:#ffff00;"></div>
<div class="a" style="left:611.19px;top:169.79px;font-size:5.6px;line-height:6.72px;color:#333;">9</div>
<div class="a" style="left:637.1px;top:168.2px;width:48.299999999999955px;height:9.900000000000006px;background:#ffff00;"></div>
<div class="a" style="left:658.14px;top:169.79px;font-size:5.6px;line-height:6.72px;color:#333;">12</div>
<div class="a" style="left:685.4px;top:168.2px;width:47.80000000000007px;height:9.900000000000006px;background:#ff6c00;"></div>
<div class="a" style="left:706.19px;top:169.79px;font-size:5.6px;line-height:6.72px;color:#333;">15</div>
<div class="a" style="left:438.50px;top:169.79px;font-size:5.6px;line-height:6.72px;color:#333;">Likely</div>
<div class="a" style="left:491.5px;top:178.1px;width:48.700000000000045px;height:9.900000000000006px;background:#ffff00;"></div>
<div class="a" style="left:514.29px;top:179.69px;font-size:5.6px;line-height:6.72px;color:#333;">4</div>
<div class="a" style="left:540.2px;top:178.1px;width:48.19999999999993px;height:9.900000000000006px;background:#ffff00;"></div>
<div class="a" style="left:562.74px;top:179.69px;font-size:5.6px;line-height:6.72px;color:#333;">8</div>
<div class="a" style="left:588.4px;top:178.1px;width:48.700000000000045px;height:9.900000000000006px;background:#ffff00;"></div>
<div class="a" style="left:609.64px;top:179.69px;font-size:5.6px;line-height:6.72px;color:#333;">12</div>
<div class="a" style="left:637.1px;top:178.1px;width:48.299999999999955px;height:9.900000000000006px;background:#ff6c00;"></div>
<div class="a" style="left:658.14px;top:179.69px;font-size:5.6px;line-height:6.72px;color:#333;">16</div>
<div class="a" style="left:685.4px;top:178.1px;width:47.80000000000007px;height:9.900000000000006px;background:#ff6c00;"></div>
<div class="a" style="left:706.19px;top:179.69px;font-size:5.6px;line-height:6.72px;color:#333;">20</div>
<div class="a" style="left:438.50px;top:179.69px;font-size:5.6px;line-height:6.72px;color:#333;">Highly likely</div>
<div class="a" style="left:491.5px;top:188px;width:48.700000000000045px;height:10px;background:#ffff00;"></div>
<div class="a" style="left:514.29px;top:189.64px;font-size:5.6px;line-height:6.72px;color:#333;">5</div>
<div class="a" style="left:540.2px;top:188px;width:48.19999999999993px;height:10px;background:#ff6c00;"></div>
<div class="a" style="left:561.19px;top:189.64px;font-size:5.6px;line-height:6.72px;color:#333;">10</div>
<div class="a" style="left:588.4px;top:188px;width:48.700000000000045px;height:10px;background:#ff6c00;"></div>
<div class="a" style="left:609.64px;top:189.64px;font-size:5.6px;line-height:6.72px;color:#333;">15</div>
<div class="a" style="left:637.1px;top:188px;width:48.299999999999955px;height:10px;background:#ff6c00;"></div>
<div class="a" style="left:658.14px;top:189.64px;font-size:5.6px;line-height:6.72px;color:#333;">20</div>
<div class="a" style="left:685.4px;top:188px;width:47.80000000000007px;height:10px;background:#ff6c00;"></div>
<div class="a" style="left:706.19px;top:189.64px;font-size:5.6px;line-height:6.72px;color:#333;">25</div>
<div class="a" style="left:438.50px;top:189.64px;font-size:5.6px;line-height:6.72px;color:#333;">Almost certain</div>
<div class="a" style="left:503.55px;top:139.89px;font-size:5.6px;line-height:6.72px;color:#333;">Negligible</div>
<div class="a" style="left:557.30px;top:139.89px;font-size:5.6px;line-height:6.72px;color:#333;">Minor</div>
<div class="a" style="left:603.26px;top:139.89px;font-size:5.6px;line-height:6.72px;color:#333;">Serious</div>
<div class="a" style="left:654.25px;top:139.89px;font-size:5.6px;line-height:6.72px;color:#333;">Major</div>
<div class="a" style="left:693.58px;top:139.89px;font-size:5.6px;line-height:6.72px;color:#333;">Catastrophic</div>
<div class="a" style="left:589.94px;top:130.69px;font-size:5.6px;line-height:6.72px;color:#333;">Severity of Impact</div>
<div class="a" style="left:438.50px;top:130.69px;font-size:5.6px;line-height:6.72px;color:#333;">Likelihood of</div>
<div class="a" style="left:438.50px;top:139.89px;font-size:5.6px;line-height:6.72px;color:#333;">Occurrence</div>
<div class="a" style="left:434.5px;top:128.9px;width:298.70000000000005px;height:0.9px;background:rgba(0,0,0,0.45);"></div>
<div class="a" style="left:491.5px;top:138.2px;width:241.70000000000005px;height:0.9px;background:rgba(0,0,0,0.45);"></div>
<div class="a" style="left:434.5px;top:147.3px;width:298.70000000000005px;height:0.9px;background:rgba(0,0,0,0.45);"></div>
<div class="a" style="left:434.5px;top:157.7px;width:298.70000000000005px;height:0.9px;background:rgba(0,0,0,0.45);"></div>
<div class="a" style="left:434.5px;top:167.7px;width:298.70000000000005px;height:0.9px;background:rgba(0,0,0,0.45);"></div>
<div class="a" style="left:434.5px;top:177.6px;width:298.70000000000005px;height:0.9px;background:rgba(0,0,0,0.45);"></div>
<div class="a" style="left:434.5px;top:187.5px;width:298.70000000000005px;height:0.9px;background:rgba(0,0,0,0.45);"></div>
<div class="a" style="left:434.5px;top:197.5px;width:298.70000000000005px;height:0.9px;background:rgba(0,0,0,0.45);"></div>
<div class="a" style="left:434.0px;top:129.4px;width:0.9px;height:68.6px;background:rgba(0,0,0,0.45);"></div>
<div class="a" style="left:491.0px;top:129.4px;width:0.9px;height:68.6px;background:rgba(0,0,0,0.45);"></div>
<div class="a" style="left:539.7px;top:138.7px;width:0.9px;height:59.30000000000001px;background:rgba(0,0,0,0.45);"></div>
<div class="a" style="left:587.9px;top:138.7px;width:0.9px;height:59.30000000000001px;background:rgba(0,0,0,0.45);"></div>
<div class="a" style="left:636.6px;top:138.7px;width:0.9px;height:59.30000000000001px;background:rgba(0,0,0,0.45);"></div>
<div class="a" style="left:684.9px;top:138.7px;width:0.9px;height:59.30000000000001px;background:rgba(0,0,0,0.45);"></div>
<div class="a" style="left:732.7px;top:129.4px;width:0.9px;height:68.6px;background:rgba(0,0,0,0.45);"></div>
<div class="a" style="left:15px;top:228px;width:753px;height:20px;background:#d9d9d9;"></div>
<div class="a" style="left:15px;top:248px;width:17px;height:162px;background:#f2f2f2;"></div>
<div class="a" style="left:422px;top:248px;width:107.5px;height:162px;background:#fce4d6;"></div>
<div class="a" style="left:706px;top:248px;width:53.5px;height:162px;background:#efefef;"></div>
<div class="a" style="left:759.5px;top:248px;width:9px;height:162px;background:#f3f3f3;"></div>
<div class="a" style="left:529.5px;top:248px;width:53.5px;height:15.5px;background:#ff0000;"></div>
<div class="a" style="left:529.5px;top:263.5px;width:53.5px;height:15.0px;background:#ffff00;"></div>
<div class="a" style="left:529.5px;top:278.5px;width:53.5px;height:16.0px;background:#00ee00;"></div>
<div class="a" style="left:15px;top:227.5px;width:753px;height:1px;background:#555;"></div>
<div class="a" style="left:15px;top:247.5px;width:753px;height:1px;background:#bdbdbd;"></div>
<div class="a" style="left:15px;top:263.0px;width:753px;height:1px;background:#555;"></div>
<div class="a" style="left:15px;top:278.0px;width:753px;height:1px;background:#555;"></div>
<div class="a" style="left:15px;top:294.0px;width:753px;height:1px;background:#555;"></div>
<div class="a" style="left:15px;top:310.0px;width:753px;height:1px;background:#555;"></div>
<div class="a" style="left:15px;top:326.0px;width:753px;height:1px;background:#555;"></div>
<div class="a" style="left:15px;top:341.0px;width:753px;height:1px;background:#555;"></div>
<div class="a" style="left:15px;top:357.0px;width:753px;height:1px;background:#555;"></div>
<div class="a" style="left:15px;top:372.0px;width:753px;height:1px;background:#555;"></div>
<div class="a" style="left:15px;top:388.0px;width:753px;height:1px;background:#555;"></div>
<div class="a" style="left:15px;top:404.0px;width:753px;height:1px;background:#555;"></div>
<div class="a" style="left:15px;top:419.5px;width:753px;height:1px;background:#555;"></div>
<div class="a" style="left:14.5px;top:228px;width:1px;height:182px;background:#555;"></div>
<div class="a" style="left:31.5px;top:228px;width:1px;height:182px;background:#c8c8c8;"></div>
<div class="a" style="left:114.0px;top:228px;width:1px;height:182px;background:#555;"></div>
<div class="a" style="left:196.0px;top:228px;width:1px;height:182px;background:#555;"></div>
<div class="a" style="left:309.0px;top:228px;width:1px;height:182px;background:#555;"></div>
<div class="a" style="left:421.5px;top:228px;width:1px;height:182px;background:#555;"></div>
<div class="a" style="left:475.0px;top:228px;width:1px;height:182px;background:#555;"></div>
<div class="a" style="left:529.0px;top:228px;width:1px;height:182px;background:#555;"></div>
<div class="a" style="left:582.5px;top:228px;width:1px;height:182px;background:#555;"></div>
<div class="a" style="left:705.5px;top:228px;width:1px;height:182px;background:#555;"></div>
<div class="a" style="left:759.0px;top:228px;width:1px;height:182px;background:#555;"></div>
<div class="a" style="left:530px;top:248px;width:52.5px;height:16.0px;background:#ff0000;"></div>
<div class="a" style="left:530px;top:263.0px;width:52.5px;height:15.5px;background:#ffff00;"></div>
<div class="a" style="left:530px;top:278.0px;width:52.5px;height:16.0px;background:#00ee00;"></div>
<div class="a" style="left:530px;top:263.0px;width:52.5px;height:0.8px;background:#c07000;"></div>
<div class="a" style="left:530px;top:278.0px;width:52.5px;height:0.8px;background:#80a000;"></div>
<div class="a" style="left:18.42px;top:234.92px;font-size:6.3px;line-height:7.56px;color:#111;font-weight:bold;-webkit-text-stroke:0.15px #111;">Ref</div>
<div class="a" style="left:48.97px;top:234.92px;font-size:6.3px;line-height:7.56px;color:#111;font-weight:bold;-webkit-text-stroke:0.15px #111;">Task/ Work Area</div>
<div class="a" style="left:131.63px;top:234.92px;font-size:6.3px;line-height:7.56px;color:#111;font-weight:bold;-webkit-text-stroke:0.15px #111;">Parties Affected</div>
<div class="a" style="left:210.12px;top:234.92px;font-size:6.3px;line-height:7.56px;color:#111;font-weight:bold;-webkit-text-stroke:0.15px #111;">Potential Hazard Description</div>
<div class="a" style="left:340.55px;top:234.92px;font-size:6.3px;line-height:7.56px;color:#111;font-weight:bold;-webkit-text-stroke:0.15px #111;">Current Controls</div>
<div class="a" style="left:436.49px;top:234.92px;font-size:6.3px;line-height:7.56px;color:#111;font-weight:bold;-webkit-text-stroke:0.15px #111;">Severity</div>
<div class="a" style="left:486.75px;top:234.92px;font-size:6.3px;line-height:7.56px;color:#111;font-weight:bold;-webkit-text-stroke:0.15px #111;">Likelihood</div>
<div class="a" style="left:616.15px;top:234.92px;font-size:6.3px;line-height:7.56px;color:#111;font-weight:bold;-webkit-text-stroke:0.15px #111;">Proposed Controls</div>
<div class="a" style="left:540.50px;top:229.52px;font-size:6.3px;line-height:7.56px;color:#111;font-weight:bold;-webkit-text-stroke:0.15px #111;">Initial Risk</div>
<div class="a" style="left:546.45px;top:239.22px;font-size:6.3px;line-height:7.56px;color:#111;font-weight:bold;-webkit-text-stroke:0.15px #111;">Rating</div>
<div class="a" style="left:720.49px;top:229.52px;font-size:6.3px;line-height:7.56px;color:#111;font-weight:bold;-webkit-text-stroke:0.15px #111;">Severity</div>
<div class="a" style="left:712.83px;top:239.18px;font-size:6.7px;line-height:8.04px;color:#555;">(after control)</div>
<div class="a" style="left:21.41px;top:252.05px;font-size:7.5px;line-height:9.00px;color:#404040;">1</div>
<div class="a" style="left:21.41px;top:267.30px;font-size:7.5px;line-height:9.00px;color:#404040;">2</div>
<div class="a" style="left:21.41px;top:282.80px;font-size:7.5px;line-height:9.00px;color:#404040;">3</div>
<div class="a" style="left:21.41px;top:298.80px;font-size:7.5px;line-height:9.00px;color:#404040;">4</div>
<div class="a" style="left:21.41px;top:314.80px;font-size:7.5px;line-height:9.00px;color:#404040;">5</div>
<div class="a" style="left:21.41px;top:330.30px;font-size:7.5px;line-height:9.00px;color:#404040;">6</div>
<div class="a" style="left:21.41px;top:345.80px;font-size:7.5px;line-height:9.00px;color:#404040;">7</div>
<div class="a" style="left:21.41px;top:361.30px;font-size:7.5px;line-height:9.00px;color:#404040;">8</div>
<div class="a" style="left:21.41px;top:376.80px;font-size:7.5px;line-height:9.00px;color:#404040;">9</div>
<div class="a" style="left:19.33px;top:392.80px;font-size:7.5px;line-height:9.00px;color:#404040;">10</div>
<div class="a" style="left:19.61px;top:408.55px;font-size:7.5px;line-height:9.00px;color:#404040;">11</div>
<div class="a" style="left:428.68px;top:251.96px;font-size:7.15px;line-height:8.58px;color:#404040;">Catastrophic</div>
<div class="a" style="left:482.43px;top:251.96px;font-size:7.15px;line-height:8.58px;color:#404040;">Highly Likely</div>
<div class="a" style="left:547.85px;top:252.47px;font-size:6.3px;line-height:7.56px;color:#fff;font-weight:bold;">Major</div>
<div class="a" style="left:433.05px;top:267.21px;font-size:7.15px;line-height:8.58px;color:#404040;">Negligible</div>
<div class="a" style="left:479.06px;top:267.21px;font-size:7.15px;line-height:8.58px;color:#404040;">Almost Certain</div>
<div class="a" style="left:542.25px;top:267.72px;font-size:6.3px;line-height:7.56px;color:#000;font-weight:bold;">Moderate</div>
<div class="a" style="left:439.81px;top:282.71px;font-size:7.15px;line-height:8.58px;color:#404040;">Minor</div>
<div class="a" style="left:493.36px;top:282.71px;font-size:7.15px;line-height:8.58px;color:#404040;">Likely</div>
<div class="a" style="left:547.68px;top:283.22px;font-size:6.3px;line-height:7.56px;color:#000;font-weight:bold;">Minor</div>
<div class="a" style="left:31.5px;top:247px;width:84px;height:17.2px;border:1px solid #3d8a5c"></div>
<div class="a" style="left:113.5px;top:262px;width:2.5px;height:2.5px;background:#2e7d4f;"></div>
<div class="a" style="left:471.5px;top:228px;width:0;height:0;border-left:3.5px solid transparent;border-top:3.5px solid #e00"></div>
<div class="a" style="left:525.5px;top:228px;width:0;height:0;border-left:3.5px solid transparent;border-top:3.5px solid #e00"></div>
<div class="a" style="left:579px;top:228px;width:0;height:0;border-left:3.5px solid transparent;border-top:3.5px solid #e00"></div>
<div class="a" style="left:755.5px;top:228px;width:0;height:0;border-left:3.5px solid transparent;border-top:3.5px solid #e00"></div>
<div class="a" style="left:766.00px;top:239.60px;font-size:6.5px;line-height:7.80px;color:#c08030;">(</div>
<div class="a" style="left:13.9px;top:112px;width:1.5px;height:297.5px;background:#4650c8;"></div>
<div class="a" style="left:0px;top:409.5px;width:768px;height:12.5px;background:#e6e6e6;"></div>
<div class="a" style="left:0px;top:422px;width:768px;height:11px;background:#f3f3f3;"></div>
<div class="a" style="left:43.75px;top:409.5px;width:111.25px;height:12px;background:#fff;"></div>
<div class="a" style="left:46px;top:419.8px;width:107px;height:1.4px;background:#217346;"></div>
<div class="a" style="left:48.50px;top:411.52px;font-size:6.3px;line-height:7.56px;color:#217346;font-weight:bold;transform:scaleX(1.1415);transform-origin:0 50%;">Hazard Identification Register</div>
<div class="a" style="left:163.00px;top:410.92px;font-size:6.3px;line-height:7.56px;color:#444;transform:scaleX(1.1473);transform-origin:0 50%;">Hazard Scoring Matrix</div>
<div class="a" style="left:241.8px;top:411.5px;width:0.6px;height:8px;background:#b5b5b5;"></div>
<div class="a" style="left:248.00px;top:410.92px;font-size:6.3px;line-height:7.56px;color:#444;transform:scaleX(1.1559);transform-origin:0 50%;">Definitions</div>
<div class="a" style="left:287.8px;top:411.5px;width:0.6px;height:8px;background:#b5b5b5;"></div>
<svg class="a" style="left:302.5px;top:411.8px;" width="9" height="9" viewBox="0 0 9 9"><circle cx="4.5" cy="4.5" r="3.8" fill="none" stroke="#888" stroke-width="0.7"/><path d="M4.5 2.5V6.5M2.5 4.5H6.5" stroke="#888" stroke-width="0.7"/></svg>
<svg class="a" style="left:12px;top:414px;" width="4" height="5" viewBox="0 0 4 5"><path d="M3 0.5L1 2.5L3 4.5" fill="none" stroke="#bbb" stroke-width="0.6"/></svg>
<svg class="a" style="left:25px;top:414px;" width="4" height="5" viewBox="0 0 4 5"><path d="M1 0.5L3 2.5L1 4.5" fill="none" stroke="#bbb" stroke-width="0.6"/></svg>
<div class="a" style="left:563.5px;top:413px;width:0.7px;height:0.7px;background:#999;"></div>
<div class="a" style="left:563.5px;top:415.5px;width:0.7px;height:0.7px;background:#999;"></div>
<div class="a" style="left:563.5px;top:418px;width:0.7px;height:0.7px;background:#999;"></div>
<div class="a" style="left:571.8px;top:412.5px;width:6.8px;height:7.7px;background:#fff;"></div>
<svg class="a" style="left:573.5px;top:414.5px;" width="3" height="4" viewBox="0 0 3 4"><path d="M2.5 0.3V3.7L0.5 2Z" fill="#444"/></svg>
<div class="a" style="left:578.6px;top:412.5px;width:158px;height:7.7px;background:#fff;"></div>
<div class="a" style="left:3.00px;top:425.22px;font-size:5.8px;line-height:6.96px;color:#444;transform:scaleX(0.9245);transform-origin:0 50%;">Ready</div>
<svg class="a" style="left:676px;top:423.5px;" width="8" height="7" viewBox="0 0 8 7"><path d="M0.5 0.5H7.5V6.5H0.5Z M0.5 2.5H7.5M0.5 4.5H7.5M2.8 0.5V6.5M5.2 0.5V6.5" fill="none" stroke="#777" stroke-width="0.5"/></svg>
<svg class="a" style="left:693px;top:423.5px;" width="8" height="7" viewBox="0 0 8 7"><rect x="0.5" y="0.5" width="7" height="6" fill="none" stroke="#777" stroke-width="0.5"/><rect x="2.5" y="1.5" width="3" height="4" fill="none" stroke="#777" stroke-width="0.5"/></svg>
<div class="a" style="left:706px;top:422.5px;width:16.6px;height:10.5px;background:#d2d2d2;"></div>
<svg class="a" style="left:710px;top:424px;" width="9" height="7" viewBox="0 0 9 7"><rect x="0.5" y="0.5" width="8" height="5" fill="none" stroke="#666" stroke-width="0.5"/><path d="M2.5 4H6.5" stroke="#666" stroke-width="0.5"/></svg>
<div class="a" style="left:725.5px;top:427.5px;width:3px;height:0.7px;background:#666;"></div>
<div class="a" style="left:731px;top:427.7px;width:37px;height:0.5px;background:#999;"></div>
<div class="a" style="left:754px;top:424.5px;width:1.6px;height:5.5px;background:#555;"></div>
</body></html>
